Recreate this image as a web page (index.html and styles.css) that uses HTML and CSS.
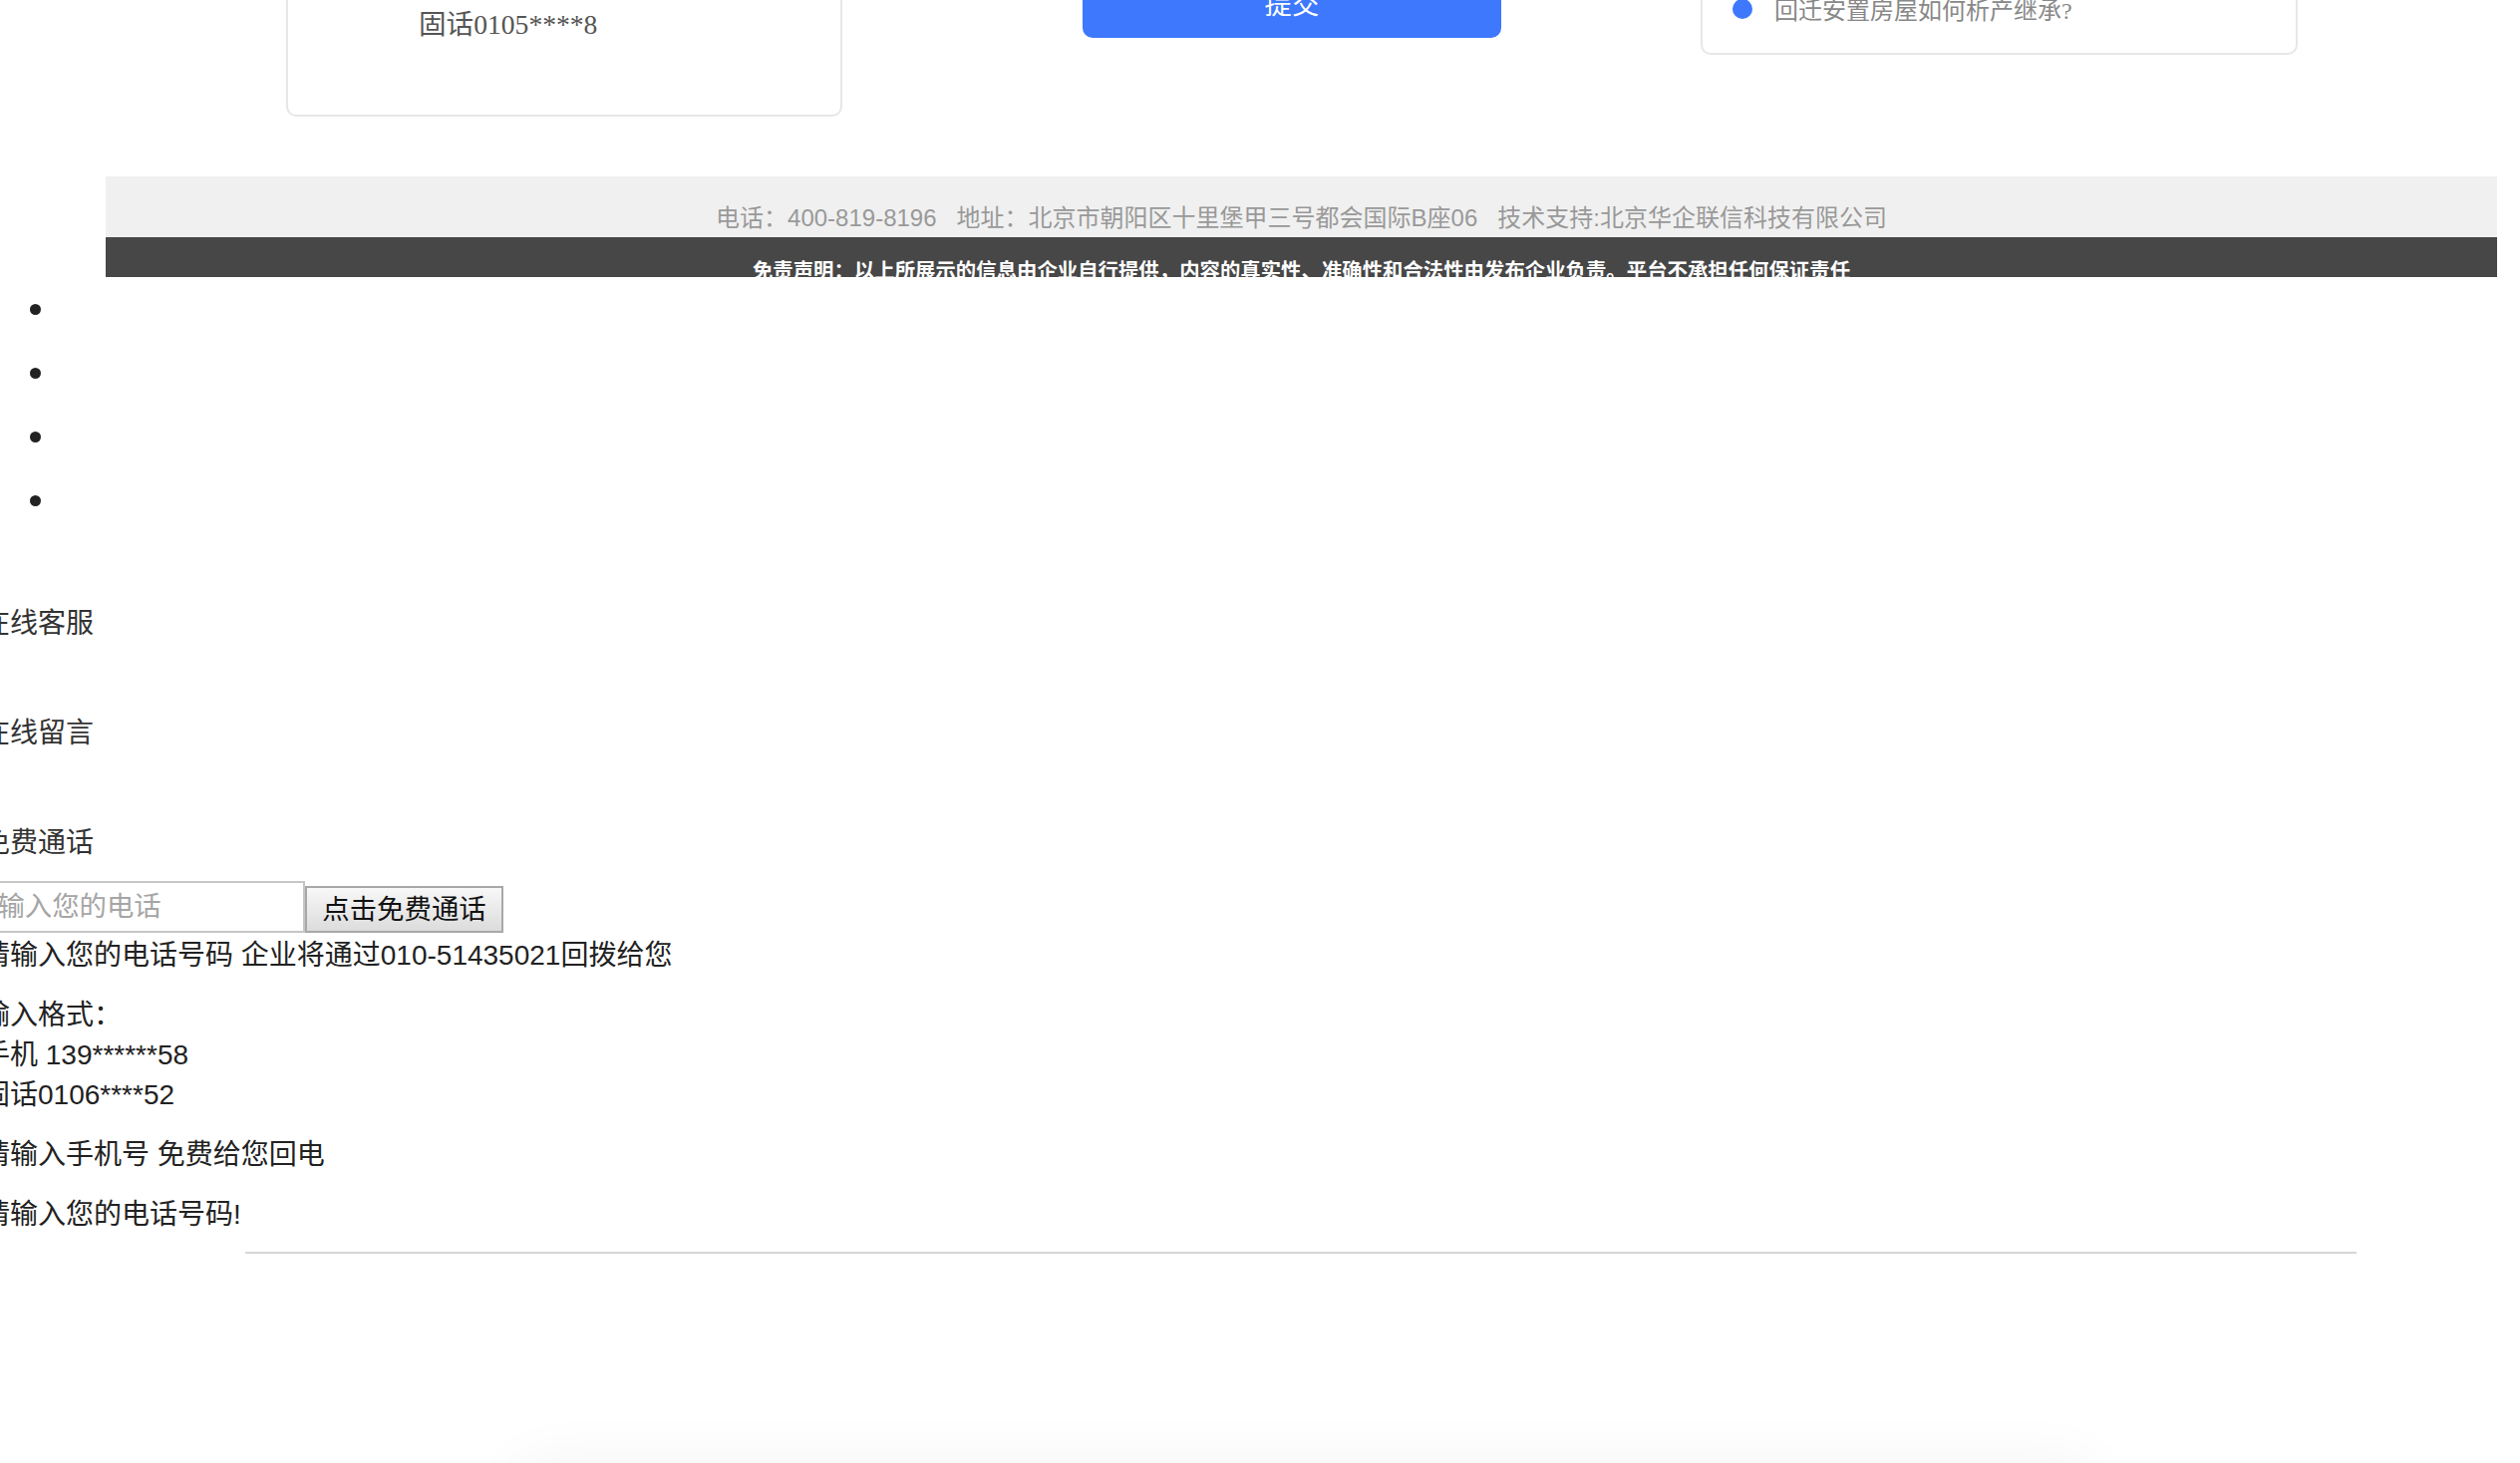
FILE: index.html
```html
<!DOCTYPE html>
<html lang="zh-CN">
<head>
<meta charset="utf-8">
<title>企业页面</title>
<link rel="stylesheet" href="styles.css">
</head>
<body>
<div class="top">
  <div class="card card-left">
    <p class="card-line">固话0105****8</p>
  </div>
  <div class="submit-col">
    <button class="submit-btn" type="button">提交</button>
  </div>
  <div class="card card-right">
    <div class="faq-item"><span class="faq-dot"></span><span class="faq-text">回迁安置房屋如何析产继承?</span></div>
  </div>
</div>

<div class="footer">
  <div class="footer-info">电话：400-819-8196&nbsp;&nbsp;&nbsp;地址：北京市朝阳区十里堡甲三号都会国际B座06&nbsp;&nbsp;&nbsp;技术支持:北京华企联信科技有限公司</div>
  <div class="footer-disclaimer">免责声明：以上所展示的信息由企业自行提供，内容的真实性、准确性和合法性由发布企业负责。平台不承担任何保证责任</div>
</div>

<ul class="side-list">
  <li></li>
  <li></li>
  <li></li>
  <li></li>
</ul>

<div class="side">
  <div class="side-item">在线客服</div>
  <div class="side-item">在线留言</div>
  <div class="side-item">免费通话</div>
  <div class="call-row">
    <input class="call-input" type="text" placeholder="请输入您的电话">
    <button class="call-btn" type="button">点击免费通话</button>
  </div>
  <div class="call-line first">请输入您的电话号码 企业将通过010-51435021回拨给您</div>
  <div class="call-line gap">输入格式：<br>手机 139******58<br>固话0106****52</div>
  <div class="call-line gap">请输入手机号 免费给您回电</div>
  <div class="call-line gap">请输入您的电话号码!</div>
</div>

<div class="divider"></div>
<div class="bottom-box"></div>
</body>
</html>
```

FILE: styles.css
```css
html, body {
  margin: 0;
  padding: 0;
  background: #ffffff;
}

body {
  font-family: "Liberation Sans", "Noto Sans CJK SC", sans-serif;
  overflow: hidden;
}

/* ---------- top row (page scrolled, tops cut off) ---------- */
.top {
  display: flex;
  align-items: flex-start;
  margin-top: -100px;
  padding-left: 287px;
}

.card {
  box-sizing: border-box;
  border: 2px solid #e7e7e7;
  border-radius: 10px;
  background: #fff;
}

.card-left {
  width: 558px;
  height: 217px;
  padding: 103px 0 0 131px;
}

.card-line {
  margin: 0;
  font-family: "Liberation Serif", "Noto Sans CJK SC", serif;
  font-size: 27.6px;
  line-height: 40px;
  color: #555;
}

.submit-col {
  margin-left: 241px;
  padding-top: 60px;
}

.submit-btn {
  display: block;
  box-sizing: border-box;
  width: 420px;
  height: 78px;
  padding: 11px 0 0;
  border: 0;
  border-radius: 10px;
  background: #3d78fd;
  color: #fff;
  font-family: "Liberation Sans", "Noto Sans CJK SC", sans-serif;
  font-size: 27.4px;
  line-height: 42px;
  text-align: center;
  vertical-align: top;
}

.card-right {
  margin-left: 200px;
  width: 599px;
  height: 155px;
  padding: 94px 0 0 30px;
}

.faq-item {
  display: flex;
  align-items: center;
  height: 30px;
}

.faq-dot {
  width: 20px;
  height: 20px;
  border-radius: 50%;
  background: #3d78fd;
  margin-right: 22px;
  margin-top: -4px;
  flex: none;
}

.faq-text {
  font-family: "Liberation Serif", "Noto Sans CJK SC", serif;
  font-size: 24px;
  line-height: 30px;
  color: #888;
}

/* ---------- footer ---------- */
.footer {
  margin: 60px 0 0 106px;
  width: 2399px;
  height: 101px;
  overflow: hidden;
}

.footer-info {
  box-sizing: border-box;
  height: 61px;
  padding-top: 24px;
  background: #f0f0f0;
  color: #999;
  font-size: 24px;
  line-height: 36px;
  text-align: center;
  white-space: nowrap;
}

.footer-disclaimer {
  box-sizing: border-box;
  height: 70px;
  padding-top: 18px;
  background: #474747;
  color: #fff;
  font-weight: bold;
  font-size: 20.4px;
  line-height: 32px;
  text-align: center;
  white-space: nowrap;
}

/* ---------- side list ---------- */
.side-list {
  margin: 0;
  padding-left: 59px;
  font-size: 27.4px;
  color: #222;
}

.side-list li {
  height: 64px;
  line-height: 64px;
}

.side-list li::marker {
  font-size: 36px;
}

.side {
  margin-left: -18px;
  font-size: 28px;
  color: #333;
}

.side-item {
  margin-top: 70px;
  line-height: 40px;
  white-space: nowrap;
  position: relative;
  top: 2px;
}

.call-row {
  display: flex;
  align-items: flex-end;
  margin-top: 20px;
}

.call-input {
  box-sizing: border-box;
  margin: 0 0 0 -22px;
  width: 346px;
  height: 52px;
  padding: 0 0 0 8px;
  border: 2px solid #c6c6c6;
  font-family: "Liberation Sans", "Noto Sans CJK SC", sans-serif;
  font-size: 27.4px;
  color: #333;
  background: #fff;
}

.call-input::placeholder {
  color: #a5a5a5;
}

.call-btn {
  box-sizing: border-box;
  margin: 0;
  width: 199px;
  height: 47px;
  padding: 0;
  border: 2px solid #a8a8a8;
  background: linear-gradient(#f8f8f8, #dcdcdc);
  font-family: "Liberation Sans", "Noto Sans CJK SC", sans-serif;
  font-size: 27.4px;
  line-height: 43px;
  color: #111;
}

.call-line {
  line-height: 40px;
  white-space: nowrap;
  color: #222;
}

.call-line.first {
  margin-top: 3px;
}

.call-line.gap {
  margin-top: 20px;
}

.divider {
  margin: 17px 0 0 246px;
  width: 2118px;
  height: 2px;
  background: #d6d6d6;
}

.bottom-box {
  margin: 210px 0 0 520px;
  width: 1580px;
  height: 300px;
  border-radius: 20px;
  background: #fff;
  box-shadow: 0 0 60px rgba(0, 0, 0, 0.05);
}
```
